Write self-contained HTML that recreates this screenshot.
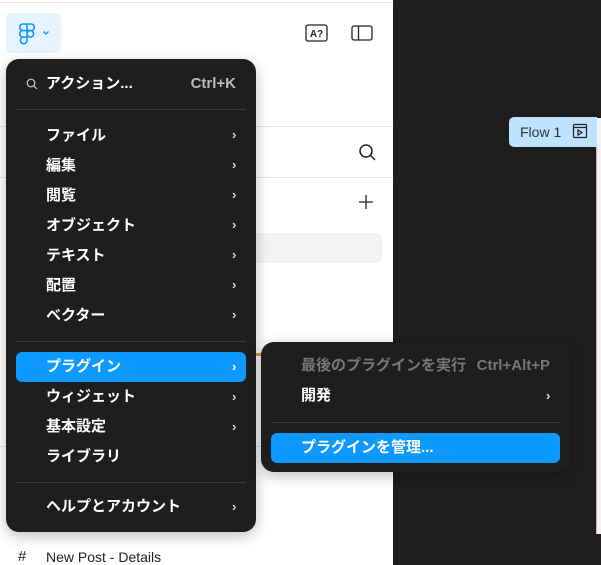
<!DOCTYPE html>
<html><head><meta charset="utf-8"><style>
*{margin:0;padding:0;box-sizing:border-box}
body{width:601px;height:565px;overflow:hidden;background:#fff;position:relative;font-family:"Liberation Sans","Noto Sans CJK JP",sans-serif}
.a{position:absolute}
.menu{background:#1e1e1e;border-radius:13px;box-shadow:0 4px 14px rgba(0,0,0,.25)}
.it{position:absolute;left:46px;color:#fff;font-size:15px;font-weight:bold;line-height:30px;height:30px}
.ch{position:absolute;color:#ddd;font-size:13px;font-weight:bold;line-height:30px}
.sep{position:absolute;height:1px;background:#3a3a3a}
</style></head><body>
<div class="a" style="left:0;top:2px;width:601px;height:1px;background:#e6e6e6"></div>
<div class="a" style="left:0;top:126px;width:393px;height:1px;background:#e6e6e6"></div>
<div class="a" style="left:0;top:177px;width:393px;height:1px;background:#e6e6e6"></div>
<div class="a" style="left:0;top:446px;width:393px;height:1px;background:#e6e6e6"></div>
<div class="a" style="left:180px;top:233px;width:202px;height:30px;background:#f3f3f3;border-radius:6px"></div>
<div class="a" style="left:256px;top:353px;width:10px;height:3px;background:#e0a020"></div>
<div class="a" style="left:393px;top:0;width:208px;height:565px;background:#1e1e1e"></div>
<div class="a" style="left:596px;top:118px;width:5px;height:416px;background:#f7f0f0;border-left:1px solid #bbb"></div>
<div class="a" style="left:509px;top:117px;width:88px;height:30px;background:#bde3ff;border-radius:5px 0 0 5px;font-size:14px;color:#333;line-height:30px;padding-left:11px">Flow 1</div>
<svg class="a" style="left:572px;top:123px" width="16" height="16" viewBox="0 0 16 16" fill="none" stroke="#222" stroke-width="1.2"><rect x="1.5" y="1.5" width="13" height="13" rx="1"/><path d="M1.5 4.5h13M6 7v5l4-2.5z"/></svg>
<div class="a" style="left:6px;top:13px;width:55px;height:40px;background:#e5f4ff;border-radius:5px"></div>
<svg class="a" style="left:19px;top:23px" width="16" height="22" viewBox="0 0 16 22" fill="none" stroke="#0d99ff" stroke-width="1.6"><path d="M4 1h8a3.3 3.3 0 0 1 0 6.6H4A3.3 3.3 0 0 1 4 1zM4 7.6h4v6.6H4a3.3 3.3 0 0 1 0-6.6zM8 1v13.2M11.3 14.2a3.3 3.3 0 1 1 0-6.6 3.3 3.3 0 0 1 0 6.6zM4 14.2h4v3.3a3.3 3.3 0 1 1-4-3.3z"/></svg>
<svg class="a" style="left:42px;top:30px" width="8" height="6" viewBox="0 0 8 6" fill="none" stroke="#0d99ff" stroke-width="1.3"><path d="M1.5 1.5 4 4l2.5-2.5"/></svg>
<svg class="a" style="left:305px;top:24px" width="24" height="18" viewBox="0 0 24 18"><rect x="1" y="1" width="21" height="16" rx="2" fill="none" stroke="#222" stroke-width="1.3"/><text x="11.5" y="13" font-size="10" font-weight="bold" text-anchor="middle" font-family="Liberation Sans" fill="#222">A?</text></svg>
<svg class="a" style="left:351px;top:25px" width="22" height="17" viewBox="0 0 22 17" fill="none" stroke="#222" stroke-width="1.3"><rect x="1" y="1" width="20" height="14" rx="2"/><path d="M7.5 1v14"/></svg>
<svg class="a" style="left:358px;top:143px" width="20" height="20" viewBox="0 0 20 20" fill="none" stroke="#222" stroke-width="1.5"><circle cx="8" cy="8" r="6"/><path d="M12.5 12.5 17 17"/></svg>
<svg class="a" style="left:358px;top:194px" width="16" height="16" viewBox="0 0 16 16" fill="none" stroke="#222" stroke-width="1.3"><path d="M8 1v14M1 8h14"/></svg>
<div class="a" style="left:18px;top:548px;font-size:15px;color:#222">#</div>
<div class="a" style="left:46px;top:549px;font-size:14px;color:#222">New Post - Details</div>

<div class="a menu" style="left:6px;top:59px;width:250px;height:473px">
<svg class="a" style="left:20px;top:19px" width="12" height="12" viewBox="0 0 12 12" fill="none" stroke="#ccc" stroke-width="1.2"><circle cx="5" cy="5" r="3.8"/><path d="M8 8l3 3"/></svg>
<div class="it" style="left:40px;top:10px">アクション...</div>
<div class="a" style="right:20px;top:10px;line-height:30px;font-size:15px;color:#bbb;font-weight:bold">Ctrl+K</div>
<div class="sep" style="left:10px;width:230px;top:50px"></div>
<div class="it" style="left:40px;top:62px">ファイル</div><div class="ch" style="left:226px;top:61px">›</div>
<div class="it" style="left:40px;top:92px">編集</div><div class="ch" style="left:226px;top:91px">›</div>
<div class="it" style="left:40px;top:122px">閲覧</div><div class="ch" style="left:226px;top:121px">›</div>
<div class="it" style="left:40px;top:152px">オブジェクト</div><div class="ch" style="left:226px;top:151px">›</div>
<div class="it" style="left:40px;top:182px">テキスト</div><div class="ch" style="left:226px;top:181px">›</div>
<div class="it" style="left:40px;top:212px">配置</div><div class="ch" style="left:226px;top:211px">›</div>
<div class="it" style="left:40px;top:242px">ベクター</div><div class="ch" style="left:226px;top:241px">›</div>
<div class="sep" style="left:10px;width:230px;top:282px"></div>
<div class="a" style="left:10px;top:293px;width:230px;height:30px;background:#0d99ff;border-radius:6px"></div>
<div class="it" style="left:40px;top:293px">プラグイン</div><div class="ch" style="left:226px;top:293px;color:#fff">›</div>
<div class="it" style="left:40px;top:323px">ウィジェット</div><div class="ch" style="left:226px;top:323px">›</div>
<div class="it" style="left:40px;top:353px">基本設定</div><div class="ch" style="left:226px;top:353px">›</div>
<div class="it" style="left:40px;top:383px">ライブラリ</div>
<div class="sep" style="left:10px;width:230px;top:423px"></div>
<div class="it" style="left:40px;top:433px">ヘルプとアカウント</div><div class="ch" style="left:226px;top:433px">›</div>
</div>

<div class="a menu" style="left:261px;top:342px;width:309px;height:130px">
<div class="it" style="left:40px;top:9px;color:#777">最後のプラグインを実行</div>
<div class="a" style="right:20px;top:9px;line-height:30px;font-size:15px;color:#777;font-weight:bold">Ctrl+Alt+P</div>
<div class="it" style="left:40px;top:39px">開発</div><div class="ch" style="left:285px;top:39px">›</div>
<div class="sep" style="left:10px;width:289px;top:80px"></div>
<div class="a" style="left:10px;top:91px;width:289px;height:30px;background:#0d99ff;border-radius:6px"></div>
<div class="it" style="left:40px;top:91px">プラグインを管理...</div>
</div>
</body></html>
